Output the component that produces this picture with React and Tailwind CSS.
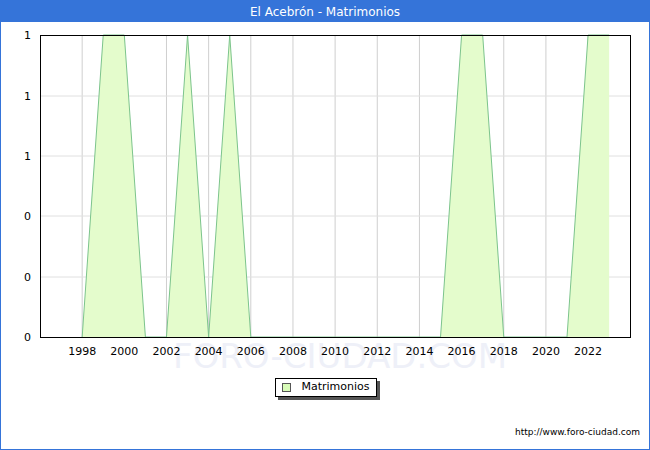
import React from "react";

const data = [
  [1998, 0], [1999, 1], [2000, 1], [2001, 0], [2002, 0], [2003, 1], [2004, 0],
  [2005, 1], [2006, 0], [2015, 0], [2016, 1], [2017, 1], [2018, 0], [2021, 0],
  [2022, 1], [2023, 1],
];
const X = (y) => 40 + (y - 1996) * 21.08;
const Y = (v) => 337 - v * 302;

const years = [];
for (let y = 1998; y <= 2022; y += 2) years.push(y);
const yTicks = [
  ["1", 35], ["1", 96], ["1", 156], ["0", 216], ["0", 277], ["0", 337],
];

const Chart = () => {
  const pts = data.map(([y, v]) => `${X(y)},${Y(v)}`).join(" ");
  const fill = `${pts} ${X(2023)},337`;
  return (
    <svg width="648" height="352" viewBox="1 22 648 352" className="block">
      <text x="340" y="368" textAnchor="middle" fontSize="34" fill="#eef0f8" fontFamily="DejaVu Sans">FORO-CIUDAD.COM</text>
      {years.map((y) => (
        <line key={y} x1={X(y)} x2={X(y)} y1="35" y2="337" stroke="#cfcfcf" />
      ))}
      {[96, 156, 216, 277].map((y) => (
        <line key={y} x1="40" x2="630" y1={y} y2={y} stroke="#e0e0e0" />
      ))}
      <polygon points={fill} fill="#e4fccc" />
      <polyline points={pts} fill="none" stroke="#7cc48c" strokeWidth="1" />
      <rect x="40.5" y="35.5" width="590" height="302" fill="none" stroke="#000" />
      {yTicks.map(([t, y], i) => (
        <text key={i} x="31" y={y + 4} textAnchor="end" fontSize="11" fontFamily="DejaVu Sans" fill="#000">{t}</text>
      ))}
      {years.map((y) => (
        <text key={y} x={X(y)} y="355" textAnchor="middle" fontSize="11" fontFamily="DejaVu Sans" fill="#000">{y}</text>
      ))}
    </svg>
  );
};

export default function App() {
  return (
    <div className="w-[650px] h-[450px] border border-[#3574d9] flex flex-col bg-white" style={{ fontFamily: "'DejaVu Sans', sans-serif" }}>
      <div className="h-[21px] bg-[#3574d9] text-white text-[12px] flex items-center justify-center">
        El Acebrón - Matrimonios
      </div>
      <Chart />
      <div className="flex justify-center mt-[4px] pl-[2px]">
        <div className="border border-black bg-white shadow-[3px_3px_0_#555] h-[19px] px-[6px] flex items-center gap-[10px] text-[11px]">
          <span className="w-[9px] h-[9px] border border-[#555] bg-[#d8fcb8]" />
          <span>Matrimonios</span>
        </div>
      </div>
      <div className="mt-auto mb-[10px] mr-[9px] text-right text-[9px]">http://www.foro-ciudad.com</div>
    </div>
  );
}
